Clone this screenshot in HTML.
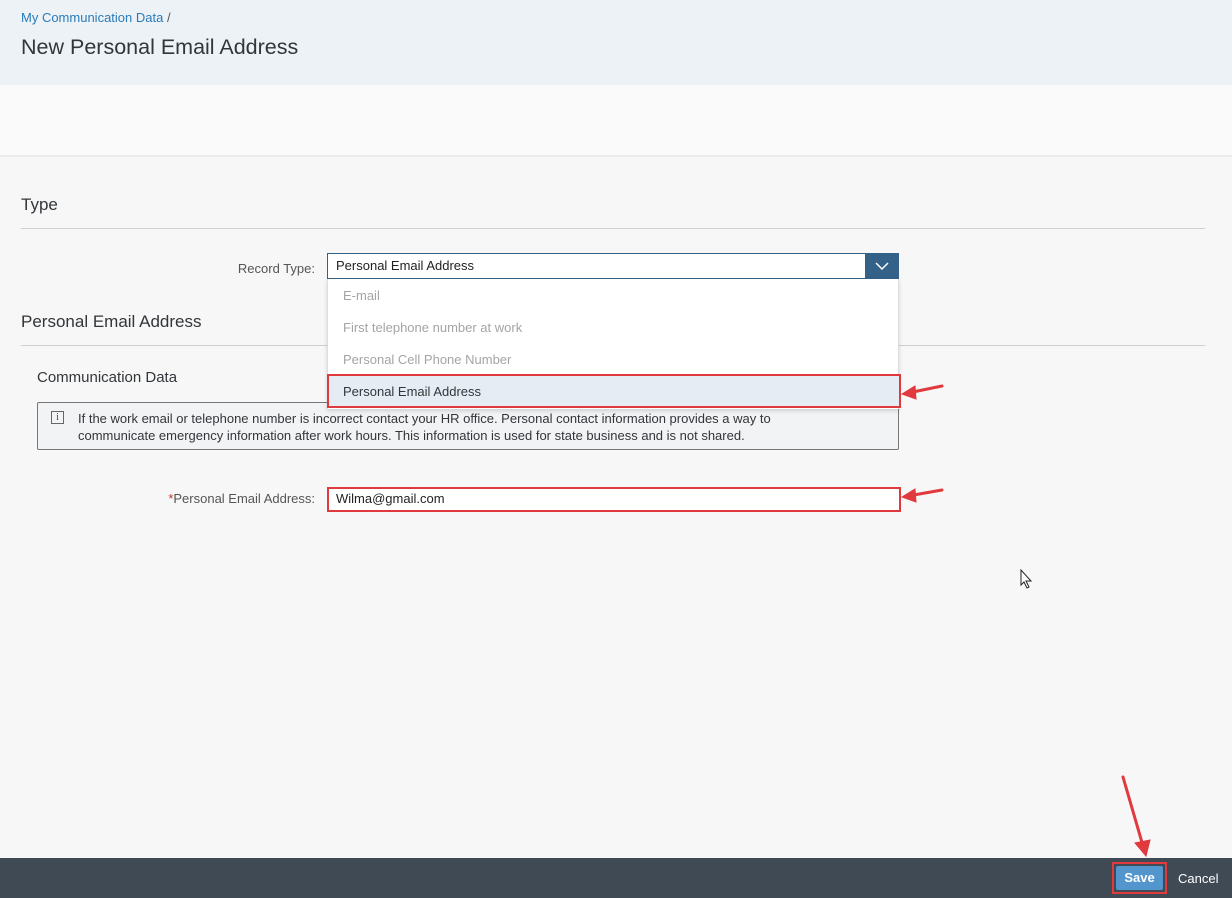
<!DOCTYPE html>
<html><head><style>
*{margin:0;padding:0;box-sizing:border-box}
body{width:1232px;height:898px;position:relative;overflow:hidden;background:#f7f7f7;font-family:"Liberation Sans",sans-serif;color:#32363a}
.a{position:absolute}
.hdr{left:0;top:0;width:1232px;height:85px;background:#edf2f7}
.lbl{font-size:13px;color:#555}
.opt{left:343px;font-size:13px;color:#a4a4a4}
</style></head><body>
<div class="a hdr"></div>
<div class="a" style="left:21px;top:10px;font-size:13px;color:#2a7bb8">My Communication Data <span style="color:#555">/</span></div>
<div class="a" style="left:21px;top:35px;font-size:21.5px;color:#32363a">New Personal Email Address</div>
<div class="a" style="left:0;top:85px;width:1232px;height:71px;background:#fafafa"></div>
<div class="a" style="left:0;top:155px;width:1232px;height:2px;background:#ececec"></div>
<div class="a" style="left:21px;top:195px;font-size:17px">Type</div>
<div class="a" style="left:21px;top:228px;width:1184px;height:1px;background:#d0d0d0"></div>
<div class="a lbl" style="left:200px;width:115px;text-align:right;top:261px">Record Type:</div>
<div class="a" style="left:327px;top:253px;width:572px;height:26px;background:#fff;border:1px solid #346187"></div>
<div class="a" style="left:336px;top:258px;font-size:13px;color:#222">Personal Email Address</div>
<div class="a" style="left:865px;top:253px;width:34px;height:26px;background:#346187"></div>
<svg class="a" style="left:874px;top:260px" width="16" height="12"><path d="M2 3 L8 9 L14 3" stroke="#fff" stroke-width="1.5" fill="none"/></svg>
<div class="a" style="left:21px;top:312px;font-size:17px">Personal Email Address</div>
<div class="a" style="left:21px;top:345px;width:1184px;height:1px;background:#d0d0d0"></div>
<div class="a" style="left:37px;top:369px;font-size:15px">Communication Data</div>
<div class="a" style="left:37px;top:402px;width:862px;height:48px;border:1px solid #777;border-radius:2px;background:#f2f3f4"></div>
<div class="a" style="left:51px;top:411px;width:13px;height:13px;border:1px solid #666;font-size:10px;line-height:11px;text-align:center;font-family:'Liberation Serif',serif;color:#444">i</div>
<div class="a" style="left:78px;top:410px;font-size:13px;line-height:17px;color:#32363a;width:760px">If the work email or telephone number is incorrect contact your HR office. Personal contact information provides a way to communicate emergency information after work hours. This information is used for state business and is not shared.</div>
<div class="a" style="left:327px;top:279px;width:572px;height:130px;background:#fff;border-left:1px solid #ddd;border-right:1px solid #ddd;box-shadow:0 2px 4px rgba(0,0,0,.15)"></div>
<div class="a opt" style="top:288px">E-mail</div>
<div class="a opt" style="top:320px">First telephone number at work</div>
<div class="a opt" style="top:352px">Personal Cell Phone Number</div>
<div class="a" style="left:327px;top:374px;width:574px;height:34px;background:#e6ecf3;border:2px solid #e0393e"></div>
<div class="a" style="left:343px;top:384px;font-size:13px;color:#32363a">Personal Email Address</div>
<div class="a lbl" style="left:120px;width:195px;text-align:right;top:491px"><span style="color:#c0392b">*</span>Personal Email Address:</div>
<div class="a" style="left:327px;top:487px;width:574px;height:25px;background:#fff;border:2px solid #e0393e"></div>
<div class="a" style="left:336px;top:491px;font-size:13px;color:#222">Wilma@gmail.com</div>
<svg class="a" style="left:0;top:0" width="1232" height="898">
<g stroke="#e0393e" stroke-width="3" fill="#e0393e" stroke-linecap="round">
<line x1="942" y1="386" x2="908" y2="393"/><polygon points="902,394 915,386 916,399" stroke-width="1"/>
<line x1="942" y1="490" x2="908" y2="496"/><polygon points="902,497 915,489 916,502" stroke-width="1"/>
<line x1="1123" y1="777" x2="1143" y2="846"/><polygon points="1146,856 1135,843 1150,840" stroke-width="1"/>
</g>
<path d="M1021 570 L1021 585 L1024 582 L1027 588 L1029 587 L1026 581 L1031 581 Z" fill="#fff" stroke="#222" stroke-width="1"/>
</svg>
<div class="a" style="left:0;top:858px;width:1232px;height:40px;background:#3f4a55"></div>
<div class="a" style="left:1112px;top:862px;width:55px;height:32px;border:2px solid #e0393e"></div>
<div class="a" style="left:1116px;top:866px;width:47px;height:24px;background:#5396ce;border-radius:2px;color:#fff;font-size:13px;font-weight:bold;text-align:center;line-height:24px">Save</div>
<div class="a" style="left:1178px;top:871px;font-size:13px;color:#fff">Cancel</div>
</body></html>
